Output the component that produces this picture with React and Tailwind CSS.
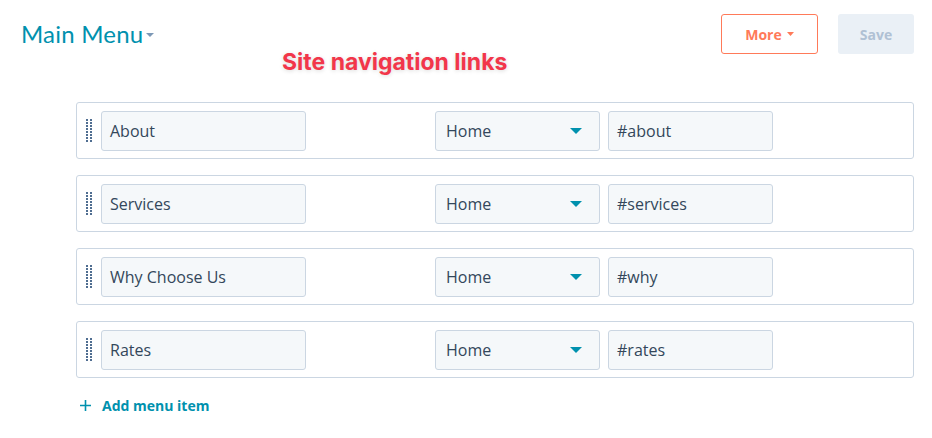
import React from 'react';

const items = [
  { label: 'About', page: 'Home', link: '#about' },
  { label: 'Services', page: 'Home', link: '#services' },
  { label: 'Why Choose Us', page: 'Home', link: '#why' },
  { label: 'Rates', page: 'Home', link: '#rates' },
];

const DragHandle = () => (
  <svg width="6" height="23" viewBox="0 0 6 23" className="shrink-0">
    {[0, 3, 6, 9, 12, 15, 18, 21].map((y) => (
      <g key={y} fill="#506e91">
        <rect x="0" y={y} width="2" height="2" />
        <rect x="4" y={y} width="2" height="2" />
      </g>
    ))}
  </svg>
);

const Caret = ({ w, h, color }) => (
  <svg width={w} height={h} viewBox={`0 0 ${w} ${h}`}>
    <polygon points={`0,0 ${w},0 ${w / 2},${h}`} fill={color} />
  </svg>
);

const MenuRow = ({ item }) => (
  <div className="flex items-center h-[57px] border border-[#cbd6e2] rounded-[3px] bg-white pl-[9px] font-['Open_Sans',sans-serif]">
    <DragHandle />
    <div className="ml-[9px] w-[205px] h-[40px] flex items-center px-[8px] bg-[#f5f8fa] border border-[#cbd6e2] rounded-[3px] text-[16px] text-[#33475b]">
      {item.label}
    </div>
    <div className="ml-[129px] w-[165px] h-[40px] flex items-center justify-between pl-[10px] pr-[17px] bg-[#f5f8fa] border border-[#cbd6e2] rounded-[3px] text-[16px] text-[#33475b]">
      <span>{item.page}</span>
      <Caret w={12} h={6} color="#0091ae" />
    </div>
    <div className="ml-[8px] w-[165px] h-[40px] flex items-center px-[8px] bg-[#f5f8fa] border border-[#cbd6e2] rounded-[3px] text-[16px] text-[#33475b]">
      {item.link}
    </div>
  </div>
);

export default function App() {
  return (
    <div className="relative w-[932px] h-[438px] bg-white font-['Lato','Open_Sans',sans-serif]">
      {/* Header */}
      <div className="flex items-start justify-between pl-[21px] pr-[18px] pt-[14px]">
        <div className="flex items-center h-[40px]">
          <span className="text-[24px] text-[#0091ae] font-normal tracking-[0.2px]">Main Menu</span>
          <span className="ml-[3px] mt-[1px]">
            <Caret w={8} h={4} color="#7c98b6" />
          </span>
        </div>
        <div className="flex items-center gap-[20px] font-['Open_Sans',sans-serif]">
          <button className="flex items-center justify-center gap-[5px] w-[97px] h-[40px] border border-[#ff7a59] rounded-[3px] text-[14px] font-bold text-[#ff7a59]">
            More
            <Caret w={7} h={4} color="#ff7a59" />
          </button>
          <button className="w-[76px] h-[40px] bg-[#eaf0f6] rounded-[3px] text-[14px] font-bold text-[#b0c1d4]">
            Save
          </button>
        </div>
      </div>

      {/* Annotation */}
      <div className="absolute left-[282px] top-[45px] text-[23px] font-bold text-[#f2364a] font-['Inter',sans-serif] [text-shadow:0_1px_4px_rgba(0,0,0,0.15)]">
        Site navigation links
      </div>

      {/* Rows */}
      <div className="mt-[48px] ml-[76px] mr-[18px] flex flex-col gap-[16px]">
        {items.map((item) => (
          <MenuRow key={item.label} item={item} />
        ))}
      </div>

      <button className="mt-[17px] ml-[80px] flex items-center gap-[11px] text-[14px] font-bold text-[#0091ae] font-['Open_Sans',sans-serif]">
        <svg width="11" height="11" viewBox="0 0 11 11">
          <path d="M5.5 0v11M0 5.5h11" stroke="#0091ae" strokeWidth="1.6" />
        </svg>
        Add menu item
      </button>
    </div>
  );
}
